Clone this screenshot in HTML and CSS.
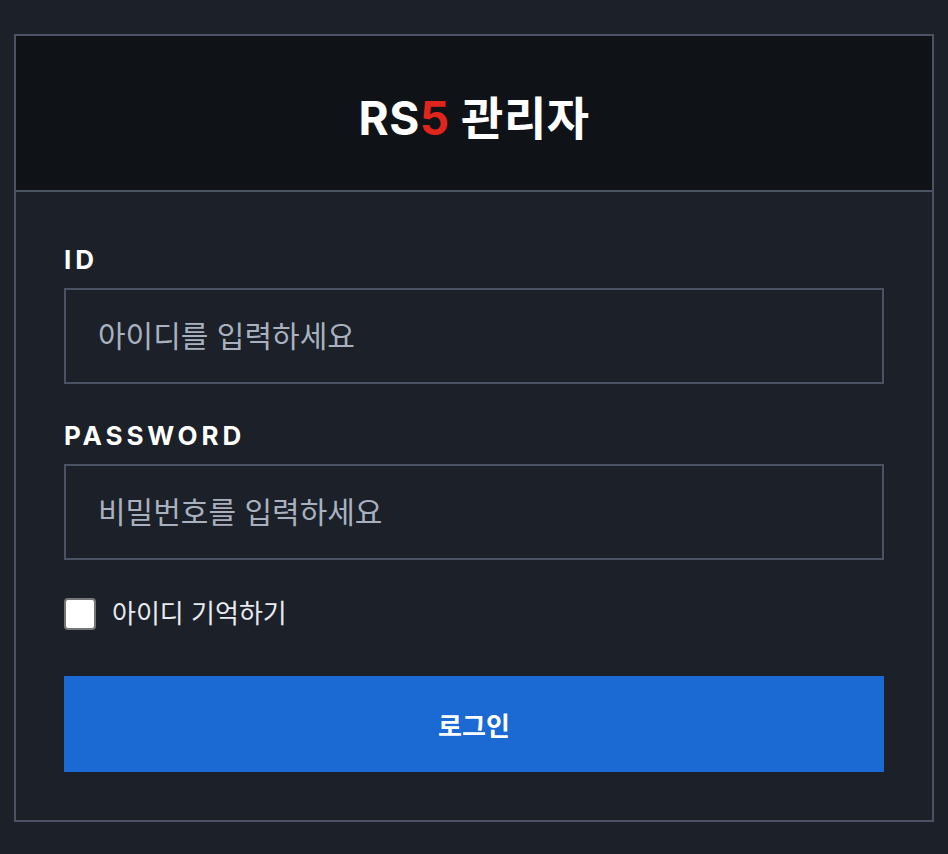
FILE: index.html
```html
<!DOCTYPE html>
<html lang="ko">
<head>
    <meta charset="UTF-8">
    <meta name="viewport" content="width=device-width, initial-scale=1.0">
    <title>RS5 관리자 | 로그인</title>
    <link rel="stylesheet" href="styles.css">
</head>
<body>
    <div class="login-card">
        <!-- Header -->
        <div class="login-header">
            <h1>RS<span class="accent">5</span> 관리자</h1>
        </div>

        <!-- Login Form -->
        <form class="login-form" action="/admin/login" method="POST">
            <div class="form-group">
                <label for="user-id">ID</label>
                <input type="text" id="user-id" name="user_id" placeholder="아이디를 입력하세요">
            </div>

            <div class="form-group">
                <label for="password">PASSWORD</label>
                <input type="password" id="password" name="password" placeholder="비밀번호를 입력하세요">
            </div>

            <label class="remember">
                <input type="checkbox" name="remember">
                <span>아이디 기억하기</span>
            </label>

            <button type="submit" class="login-btn">로그인</button>
        </form>
    </div>
</body>
</html>
```

FILE: styles.css
```css
/* Variables */
:root {
    --bg: #1b2029;
    --header: #0f1318;
    --border: #4a5264;
    --text: #ffffff;
    --muted: #a9b1be;
    --accent: #e0261c;
    --primary: #1b69d2;
}

* {
    box-sizing: border-box;
}

body {
    margin: 0;
    padding: 34px 14px 0;
    background-color: var(--bg);
    color: var(--text);
    font-family: Inter, "Noto Sans CJK KR", sans-serif;
}

.login-card {
    border: 2px solid var(--border);
}

.login-header {
    background: var(--header);
    border-bottom: 2px solid var(--border);
    height: 156px;
    padding-top: 10px;
    display: flex;
    justify-content: center;
    align-items: center;
}

h1 {
    margin: 0;
    font-size: 46px;
    font-weight: 700;
    letter-spacing: 0.5px;
    line-height: 1;
}

.accent {
    color: var(--accent);
}

.login-form {
    padding: 48px;
    display: flex;
    flex-direction: column;
}

.form-group {
    margin-bottom: 32px;
}

.form-group label {
    display: block;
    font-size: 26px;
    font-weight: 700;
    letter-spacing: 0.15em;
    line-height: 40px;
    margin-bottom: 8px;
}

.form-group input {
    width: 100%;
    height: 96px;
    padding: 0 32px;
    background: transparent;
    border: 2px solid var(--border);
    color: var(--text);
    font-family: inherit;
    font-size: 30px;
    outline: none;
}

.form-group input::placeholder {
    color: var(--muted);
}

.form-group + .form-group {
    margin-bottom: 36px;
}

.remember {
    display: flex;
    align-items: center;
    gap: 16px;
    font-size: 26px;
    line-height: 36px;
    color: #e8ebf0;
    cursor: pointer;
}

.remember input {
    appearance: none;
    margin: 0;
    width: 32px;
    height: 32px;
    background: #fff;
    border: 2px solid #767676;
    border-radius: 4px;
}

.login-btn {
    margin-top: 44px;
    height: 96px;
    border: none;
    background: var(--primary);
    color: #fff;
    font-family: inherit;
    font-size: 26px;
    font-weight: 700;
    cursor: pointer;
}
```
